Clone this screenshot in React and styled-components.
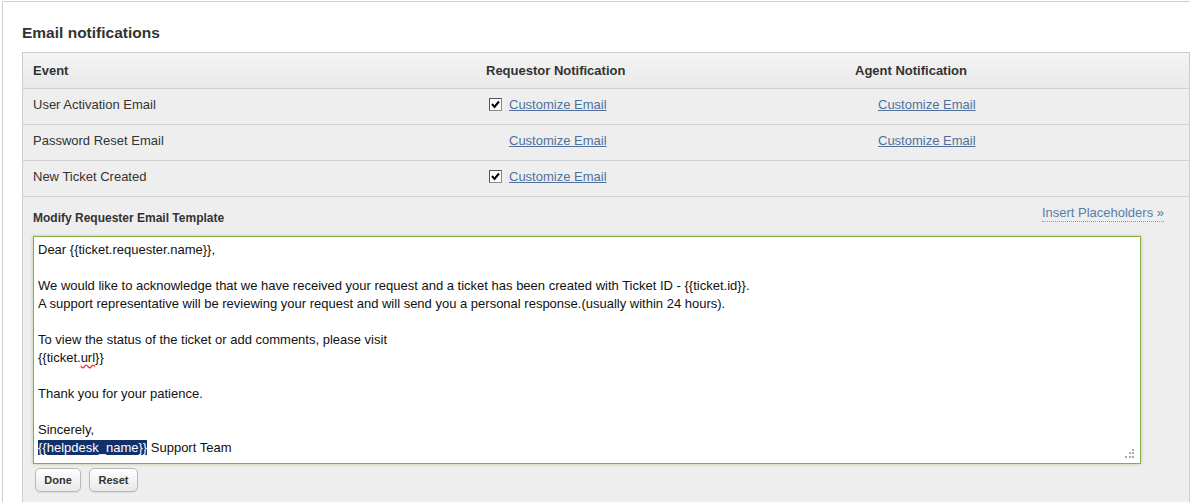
import React from 'react';
import styled, { createGlobalStyle } from 'styled-components';

const GlobalStyle = createGlobalStyle`
  html, body {
    margin: 0;
    overflow: hidden;
  }
  body {
    background: #fff;
    font-family: "Liberation Sans", Arial, sans-serif;
    color: #333;
  }
`;

const events = [
  { name: 'User Activation Email', requestor: true, checked: true, agent: true },
  { name: 'Password Reset Email', requestor: true, checked: false, agent: true },
  { name: 'New Ticket Created', requestor: true, checked: true, agent: false },
];

const Checkbox = ({ checked }) => (
  <StyledCheck $hidden={!checked}>
    {checked && (
      <svg width="9" height="9" viewBox="0 0 9 9">
        <path d="M1 4 L3.5 7 L8 1.5" fill="none" stroke="#000" strokeWidth="2" />
      </svg>
    )}
  </StyledCheck>
);

const CustomizeCell = ({ show, checkbox, checked }) => (
  <StyledCell>
    {show && (
      <>
        <Checkbox checked={checkbox && checked} />
        <StyledLink href="#">Customize Email</StyledLink>
      </>
    )}
  </StyledCell>
);

const ResizeGrip = () => (
  <StyledGrip width="10" height="10" viewBox="0 0 10 10">
    <rect x="7" y="0" width="2" height="2" fill="#aaa" />
    <rect x="4" y="3" width="2" height="2" fill="#aaa" />
    <rect x="7" y="3" width="2" height="2" fill="#aaa" />
    <rect x="0" y="7" width="2" height="2" fill="#aaa" />
    <rect x="4" y="7" width="2" height="2" fill="#aaa" />
    <rect x="7" y="7" width="2" height="2" fill="#aaa" />
  </StyledGrip>
);

const App = () => {
  return (
    <>
      <GlobalStyle />
      <StyledFrame>
        <StyledTitle>Email notifications</StyledTitle>
        <StyledTable>
          <StyledHeadRow>
            <StyledCell>Event</StyledCell>
            <StyledCell>Requestor Notification</StyledCell>
            <StyledCell>Agent Notification</StyledCell>
          </StyledHeadRow>
          {events.map((ev) => (
            <StyledRow key={ev.name}>
              <StyledCell>{ev.name}</StyledCell>
              <CustomizeCell show={ev.requestor} checkbox checked={ev.checked} />
              <CustomizeCell show={ev.agent} checkbox={false} />
            </StyledRow>
          ))}

          {/* 템플릿 편집 */}
          <StyledTemplate>
            <StyledTemplateHead>
              <h4 className="label">Modify Requester Email Template</h4>
              <a className="insert" href="#">Insert Placeholders »</a>
            </StyledTemplateHead>
            <StyledEditor>
              <p>Dear {'{{ticket.requester.name}}'},</p>
              <p>&nbsp;</p>
              <p>
                We would like to acknowledge that we have received your request and a ticket has
                been created with Ticket ID - {'{{ticket.id}}'}.
              </p>
              <p>
                A support representative will be reviewing your request and will send you a
                personal response.(usually within 24 hours).
              </p>
              <p>&nbsp;</p>
              <p>To view the status of the ticket or add comments, please visit</p>
              <p>
                {'{{ticket.'}
                <StyledTypo>url</StyledTypo>
                {'}}'}
              </p>
              <p>&nbsp;</p>
              <p>Thank you for your patience.</p>
              <p>&nbsp;</p>
              <p>Sincerely,</p>
              <p>
                <StyledSelection>{'{{helpdesk_name}}'}</StyledSelection> Support Team
              </p>
              <ResizeGrip />
            </StyledEditor>
            <StyledButtonWrap>
              <StyledButton $width={46}>Done</StyledButton>
              <StyledButton $width={49}>Reset</StyledButton>
            </StyledButtonWrap>
          </StyledTemplate>
        </StyledTable>
      </StyledFrame>
    </>
  );
};

export default App;

const StyledFrame = styled.div`
  box-sizing: border-box;
  height: calc(100vh - 1px);
  margin: 1px 0 0 2px;
  border-top: 1px solid #cfcfcf;
  border-left: 1px solid #cfcfcf;
  padding: 21px 0 0 19px;
  display: flex;
  flex-direction: column;
`;

const StyledTitle = styled.h2`
  margin: 0 0 9px;
  font-size: 15.5px;
  line-height: 20px;
  font-weight: bold;
  color: #333;
`;

const StyledTable = styled.div`
  flex: 1;
  border: 1px solid #cdcdcd;
  border-bottom: none;
  background: #eeeeee;
`;

const StyledRow = styled.div`
  display: grid;
  grid-template-columns: 453px 369px 1fr;
  box-sizing: border-box;
  height: 36px;
  padding-bottom: 4px;
  border-bottom: 1px solid #d2d2d2;
  align-items: center;
  font-size: 13px;
  color: #333;
`;

const StyledHeadRow = styled(StyledRow)`
  padding-bottom: 0;
  background: linear-gradient(#f4f4f4, #e9e9e9);
  font-weight: bold;
`;

const StyledCell = styled.div`
  display: flex;
  align-items: center;
  padding: 0 10px;
`;

const StyledCheck = styled.span`
  display: inline-flex;
  align-items: center;
  justify-content: center;
  box-sizing: border-box;
  width: 13px;
  height: 13px;
  margin: 0 7px 0 3px;
  background: #fff;
  border: 1px solid #8a8a8a;
  border-top-color: #555;
  border-left-color: #555;
  visibility: ${({ $hidden }) => ($hidden ? 'hidden' : 'visible')};
`;

const StyledLink = styled.a`
  color: #50709c;
  text-decoration: underline;
  font-size: 13px;
`;

const StyledTemplate = styled.div`
  padding: 0 25px 0 10px;
`;

const StyledTemplateHead = styled.div`
  display: flex;
  justify-content: space-between;
  align-items: flex-start;
  height: 39px;

  > .label {
    margin: 13px 0 0;
    font-size: 12px;
    line-height: 16px;
    font-weight: bold;
    color: #333;
  }
  > .insert {
    margin-top: 8px;
    font-size: 13px;
    line-height: 16px;
    color: #5a7ca6;
    text-decoration: none;
    border-bottom: 1px dotted #8a9bb0;
  }
`;

const StyledEditor = styled.div`
  position: relative;
  box-sizing: border-box;
  height: 228px;
  margin-right: 23px;
  padding: 4px 4px 3px;
  background: #fff;
  border: 1px solid #86ad4a;
  box-shadow: 0 0 3px rgba(134, 173, 74, 0.55);
  font-size: 13px;
  line-height: 18px;
  color: #111;

  > p {
    margin: 0;
    white-space: nowrap;
  }
`;

const StyledTypo = styled.span`
  text-decoration: underline wavy #e33;
  text-decoration-skip-ink: none;
  text-underline-offset: 2px;
`;

const StyledSelection = styled.span`
  background: #14306b;
  color: #fff;
`;

const StyledGrip = styled.svg`
  position: absolute;
  right: 5px;
  bottom: 4px;
`;

const StyledButtonWrap = styled.div`
  display: flex;
  gap: 8px;
  padding: 4px 0 0 2px;
`;

const StyledButton = styled.button`
  width: ${({ $width }) => $width}px;
  height: 24px;
  padding: 0;
  border: 1px solid #b8b8b8;
  border-radius: 5px;
  background: linear-gradient(#ffffff, #e8e8e8);
  box-shadow: 0 1px 1px rgba(0, 0, 0, 0.08);
  font-family: "Liberation Sans", Arial, sans-serif;
  font-size: 11px;
  font-weight: bold;
  color: #333;
  cursor: pointer;
`;
